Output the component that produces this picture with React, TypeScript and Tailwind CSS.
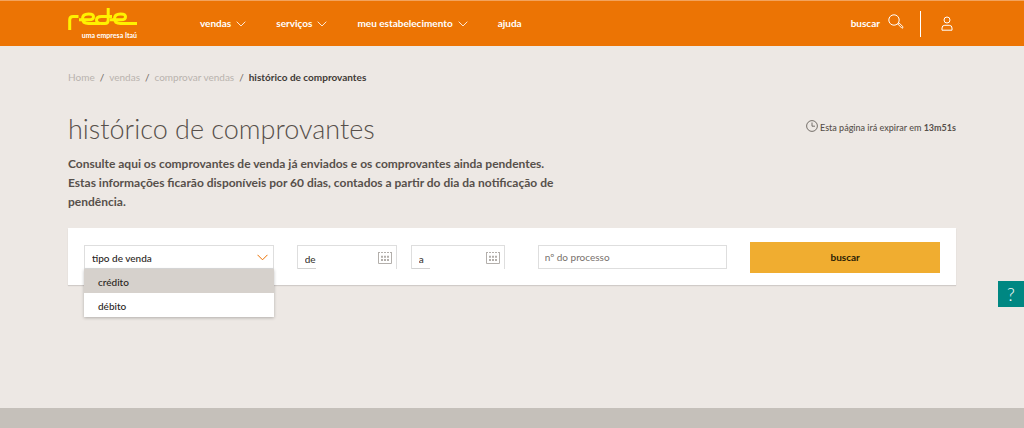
import { useState } from 'react';

interface NavItem {
  label: string;
  hasMenu: boolean;
}

const navItems: NavItem[] = [
  { label: 'vendas', hasMenu: true },
  { label: 'serviços', hasMenu: true },
  { label: 'meu estabelecimento', hasMenu: true },
  { label: 'ajuda', hasMenu: false }
];

const breadcrumbs = ['Home', 'vendas', 'comprovar vendas'];

const saleTypes = [
  { value: 'credito', label: 'crédito' },
  { value: 'debito', label: 'débito' }
];

function ChevronIcon({ className }: { className: string }) {
  return (
    <svg className={className} viewBox="0 0 11 7" fill="none" stroke="currentColor" aria-hidden="true">
      <path d="M0.5 0.8L5.5 5.8L10.5 0.8" />
    </svg>
  );
}

function Logo() {
  return (
    <a href="#" aria-label="rede, uma empresa Itaú" className="flex w-[69px] flex-col">
      <svg className="h-[23px] w-[69px]" viewBox="0 0 69 23" fill="none" stroke="#fff200" strokeWidth="3" aria-hidden="true">
        <path d="M1.7 22V12Q1.7 8.5 5 8.5H10.5" />
        <path d="M11 11.8H21Q25.5 11.8 25.5 8.8Q25.5 6 20.5 6Q14.5 6 14.5 10.8Q14.5 15.5 20.5 15.5H32" />
        <path d="M40.2 0V12Q40.2 15.5 37 15.5H33.5Q28.5 15.5 28.5 12Q28.5 8.5 33.5 8.5H44" />
        <path d="M42 11.8H53Q57.5 11.8 57.5 8.8Q57.5 6 52.5 6Q46.5 6 46.5 10.8Q46.5 15.5 52.5 15.5H69" />
      </svg>
      <span className="self-end whitespace-nowrap text-[7px] leading-2 font-bold text-white">uma empresa Itaú</span>
    </a>
  );
}

function SearchIcon() {
  return (
    <svg className="mb-1 h-4 w-4" viewBox="0 0 16 16" fill="none" stroke="currentColor" aria-hidden="true">
      <circle cx="6" cy="6" r="5.2" />
      <path d="M9.7 9.9L10.9 8.8L14.9 12.7Q15.3 13.8 14 14.3L9.7 9.9Z" />
    </svg>
  );
}

function UserIcon() {
  return (
    <svg className="h-[15px] w-3" viewBox="0 0 12 15" fill="none" stroke="currentColor" aria-hidden="true">
      <circle cx="6" cy="4" r="3" />
      <path d="M1 14.2V12Q1 9.3 3.8 9.3H8.2Q11 9.3 11 12V14.2Z" />
    </svg>
  );
}

function ClockIcon() {
  return (
    <svg className="mb-1 h-3 w-3" viewBox="0 0 12 12" fill="none" stroke="currentColor" strokeWidth="0.8" aria-hidden="true">
      <circle cx="6" cy="6" r="5.4" />
      <path d="M6 2.5V6.2H9" />
    </svg>
  );
}

function CalendarIcon() {
  return (
    <svg className="h-[13px] w-[14px]" viewBox="0 0 14 13" fill="none" stroke="currentColor" aria-hidden="true">
      <path d="M0.5 1.5V12.5H13.5V1.5" />
      <path d="M0 1.5H14" strokeDasharray="2 1" />
      <path d="M3 5.8H11M3 9H11" strokeWidth="2" strokeDasharray="2 1" />
    </svg>
  );
}

function DateField({ id, label }: { id: string; label: string }) {
  return (
    <div className="relative h-6 border border-b-0 border-[#dedede]">
      <input id={id} type="text" aria-label={label} defaultValue={label} className="block h-full w-full bg-transparent pt-0.5 pl-[7px] text-[10px] font-medium text-[#3c3733] outline-none" />
      <button type="button" aria-label="abrir calendário" className="absolute top-[5px] right-1 text-[#b3afab]">
        <CalendarIcon />
      </button>
      <span className="absolute bottom-0 left-0 h-px w-[18px] bg-[#d2d2d2]" />
    </div>
  );
}

function SaleTypeSelect() {
  const [open, setOpen] = useState(true);
  const [value, setValue] = useState('');

  return (
    <div className="relative flex-1">
      <select
        aria-label="tipo de venda"
        value={value}
        onChange={(e) => setValue(e.target.value)}
        onMouseDown={(e) => {
          e.preventDefault();
          setOpen(!open);
        }}
        className="block h-6 w-full appearance-none border border-[#dedede] bg-white pt-0.5 pl-[7px] text-[10px] font-medium text-[#2a2522] outline-none"
      >
        <option value="">tipo de venda</option>
        {saleTypes.map((type) => (
          <option key={type.value} value={type.value}>{type.label}</option>
        ))}
      </select>
      <ChevronIcon className="pointer-events-none absolute top-[9px] right-[6px] h-[7px] w-[11px] text-[#ec7000]" />
      {open && (
        <ul className="absolute top-full left-0 z-10 w-full bg-white text-[10px] font-medium text-[#2a2522] shadow-[0_1px_3px_rgba(0,0,0,0.25)]">
          {saleTypes.map((type) => (
            <li key={type.value} className="first:bg-[#d6d1cc]">
              <button
                type="button"
                className="block h-6 w-full pt-0.5 pl-[14px] text-left"
                onClick={() => {
                  setValue(type.value);
                  setOpen(false);
                }}
              >
                {type.label}
              </button>
            </li>
          ))}
        </ul>
      )}
    </div>
  );
}

function Header() {
  return (
    <header className="flex h-[46px] items-center border-t border-[#f3a35c] bg-[#ec7404] px-17 text-white">
      <Logo />
      <nav className="ml-[63px] flex items-center gap-[30px] text-[10px] font-bold">
        {navItems.map((item) => (
          <a key={item.label} href="#" className="flex items-center gap-[5px]">
            {item.label}
            {item.hasMenu && <ChevronIcon className="h-[6px] w-[10px]" />}
          </a>
        ))}
      </nav>
      <div className="mr-[3px] ml-auto flex items-center">
        <button type="button" className="flex items-center gap-2 text-[10px] font-bold">
          buscar
          <SearchIcon />
        </button>
        <span className="mr-5 ml-4 h-[26px] w-px bg-white" />
        <a href="#" aria-label="minha conta">
          <UserIcon />
        </a>
      </div>
    </header>
  );
}

export default function App() {
  return (
    <div className="min-h-screen bg-[#ede8e4] font-[Lato,sans-serif] text-[#57504b]">
      <Header />

      <main className="px-17 pt-6 pb-[123px]">
        <nav aria-label="breadcrumb" className="flex h-[14px] items-center gap-[5px] text-[10px] text-[#b9b3ae]">
          {breadcrumbs.map((crumb) => (
            <span key={crumb} className="flex gap-[5px]">
              <a href="#">{crumb}</a>
              <span className="text-[#6e6762]">/</span>
            </span>
          ))}
          <span className="font-bold text-[#3f3a36]">histórico de comprovantes</span>
        </nav>

        <div className="mt-[26px] flex items-start justify-between">
          <h1 className="text-[27px] leading-[38px] font-light">histórico de comprovantes</h1>
          <p className="mt-2 flex items-center gap-[2px] text-[9px] leading-5 font-medium">
            <ClockIcon />
            <span>Esta página irá expirar em <strong>13m51s</strong></span>
          </p>
        </div>

        <p className="mt-[6px] max-w-[500px] text-[12px] leading-[19px] font-bold">
          Consulte aqui os comprovantes de venda já enviados e os comprovantes ainda pendentes. Estas informações ficarão disponíveis por 60 dias, contados a partir do dia da notificação de pendência.
        </p>

        <form className="mt-[17px] flex h-[57px] items-center bg-white px-4 pt-px shadow-[0_1px_1px_rgba(0,0,0,0.12)]" onSubmit={(e) => e.preventDefault()}>
          <SaleTypeSelect />
          <div className="ml-[23px] w-[100px]">
            <DateField id="from" label="de" />
          </div>
          <div className="ml-[14px] w-[94px]">
            <DateField id="to" label="a" />
          </div>
          <div className="ml-[33px] flex-1">
            <input
              type="text"
              aria-label="nº do processo"
              placeholder="nº do processo"
              className="block h-6 w-full border border-[#dedede] bg-white px-[6px] text-[10px] outline-none placeholder:text-[#77716c]"
            />
          </div>
          <button type="submit" className="ml-[23px] h-[31px] flex-1 bg-[#f0ad30] text-[10px] font-bold text-[#2a1d05]">
            buscar
          </button>
        </form>
      </main>

      <footer className="h-5 bg-[#c5c0ba]" />

      <button type="button" aria-label="ajuda" className="fixed top-[281px] right-0 h-[26px] w-[26px] bg-[#008782] text-[18px] leading-[26px] font-light text-white">
        ?
      </button>
    </div>
  );
}
